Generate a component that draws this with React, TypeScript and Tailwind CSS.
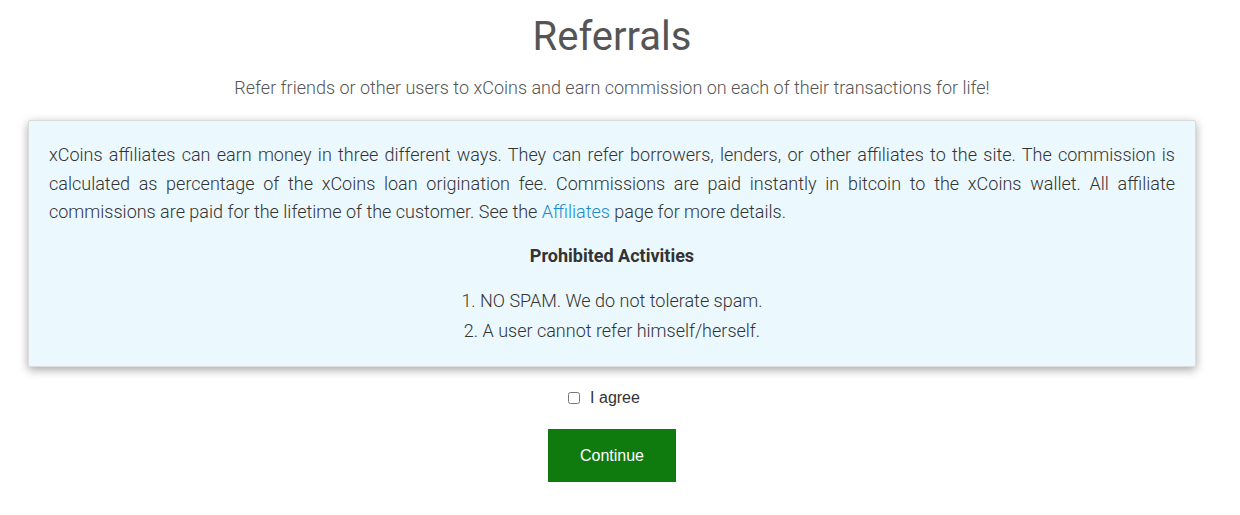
import { useState } from "react";

export default function App() {
   const [agree, setAgree] = useState(false);

   return (
      <div className="min-h-screen bg-white font-['Roboto',sans-serif]">
         <div className="w-[1224px] flex flex-col items-center">
            <h1 className="mt-[13px] text-[40px] leading-[48px] text-[#555] font-normal">
               Referrals
            </h1>
            <p className="mt-[15px] text-[18px] leading-[24px] font-light text-[#555]">
               Refer friends or other users to xCoins and earn commission on each of their transactions for life!
            </p>

            <div className="mt-[20px] w-[1168px] bg-[#ebf8fe] border border-[#dcdcdc] rounded-[2px] shadow-[0_3px_10px_rgba(0,0,0,0.35)] px-[20px] pt-[20px] pb-[20px] text-[#333]">
               <p className="text-[18px] leading-[28.5px] font-light text-justify">
                  xCoins affiliates can earn money in three different ways. They can refer borrowers, lenders, or other affiliates to the site. The commission is calculated as percentage of the xCoins loan origination fee. Commissions are paid instantly in bitcoin to the xCoins wallet. All affiliate commissions are paid for the lifetime of the customer. See the{" "}
                  <a href="#" className="text-[#1a8ac8]">Affiliates</a> page for more details.
               </p>
               <h4 className="mt-[15px] text-center text-[18px] leading-[28.5px] font-bold">
                  Prohibited Activities
               </h4>
               <ol className="mt-[16px] text-center text-[18px] leading-[30px] font-light">
                  <li>1. NO SPAM. We do not tolerate spam.</li>
                  <li>2. A user cannot refer himself/herself.</li>
               </ol>
            </div>

            <label className="mt-[21px] mr-[16px] flex items-center gap-[10px] text-[16px] leading-[20px] text-[#333] font-['Liberation_Sans',sans-serif]">
               <input
                  type="checkbox"
                  checked={agree}
                  onChange={(e) => setAgree(e.target.checked)}
                  className="w-[12px] h-[12px]"
               />
               I agree
            </label>

            <button
               type="button"
               className="mt-[21px] w-[128px] h-[53px] bg-[#0f7b0f] text-white text-[16px] font-['Liberation_Sans',sans-serif]"
            >
               Continue
            </button>
         </div>
      </div>
   );
}
